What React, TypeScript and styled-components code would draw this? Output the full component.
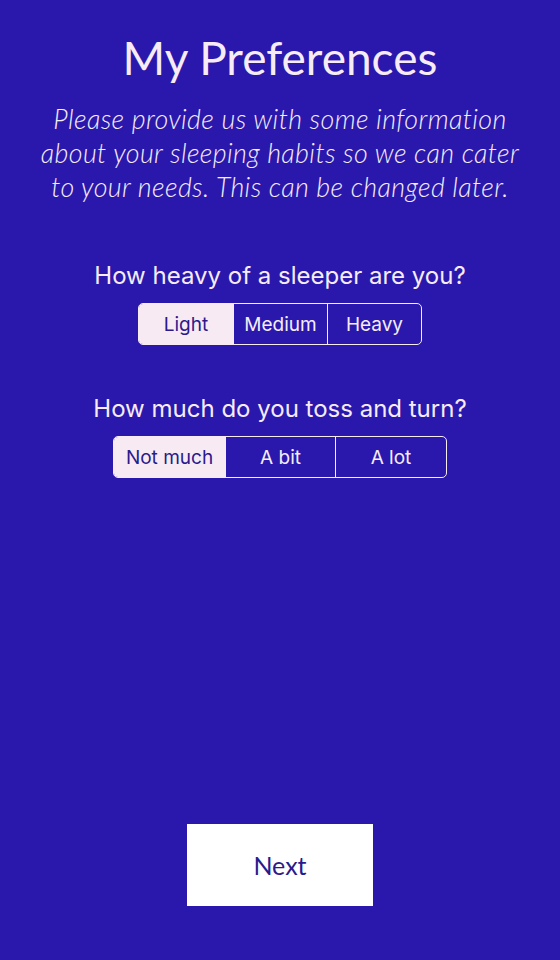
import React, { useState } from "react";
import styled, { createGlobalStyle } from "styled-components";

const Global = createGlobalStyle`
  html, body { margin: 0; padding: 0; background: #2a18ad; }
  body { font-family: "Lato", "Noto Sans", sans-serif; }
`;

const Page = styled.div`
  width: 560px;
  height: 960px;
  background: #2a18ad;
  color: #f7ecf6;
  display: flex;
  flex-direction: column;
  align-items: center;
  box-sizing: border-box;
  padding-top: 30px;
`;

const Title = styled.h1`
  margin: 0;
  font-family: "Lato", sans-serif;
  font-weight: 400;
  font-size: 46px;
  line-height: 56px;
  text-align: center;
`;

const Intro = styled.p`
  margin: 16px 0 0;
  width: 495px;
  font-family: "Lato", sans-serif;
  font-style: italic;
  font-weight: 300;
  font-size: 26.8px;
  letter-spacing: 0.4px;
  line-height: 34px;
  text-align: center;
`;

const Question = styled.div<{ $top: number }>`
  margin-top: ${(p) => p.$top}px;
  display: flex;
  flex-direction: column;
  align-items: center;
  gap: 13px;
`;

const Label = styled.div`
  font-family: "Inter", "Roboto", sans-serif;
  font-size: 24px;
  line-height: 28px;
`;

const Segmented = styled.div`
  display: flex;
  border: 1.5px solid #f7ecf6;
  border-radius: 5px;
  overflow: hidden;
`;

const Segment = styled.button<{ $active: boolean; $w: number }>`
  width: ${(p) => p.$w}px;
  height: 40px;
  margin: 0;
  padding: 0;
  border: none;
  border-left: 1.5px solid #f7ecf6;
  &:first-child { border-left: none; }
  background: ${(p) => (p.$active ? "#f7eaf3" : "transparent")};
  color: ${(p) => (p.$active ? "#2a1a8c" : "#f7ecf6")};
  font-family: "Inter", "Roboto", sans-serif;
  font-size: 19px;
  cursor: pointer;
`;

const Spacer = styled.div`
  flex: 1;
`;

const NextButton = styled.button`
  width: 186px;
  height: 82px;
  margin-bottom: 54px;
  background: #ffffff;
  border: none;
  color: #2a1a8c;
  font-family: "Lato", sans-serif;
  font-size: 25px;
  cursor: pointer;
`;

function Choice({ options, w }: { options: string[]; w: number }) {
  const [sel, setSel] = useState(0);
  return (
    <Segmented>
      {options.map((o, i) => (
        <Segment key={o} $w={w} $active={i === sel} onClick={() => setSel(i)}>
          {o}
        </Segment>
      ))}
    </Segmented>
  );
}

export default function App() {
  return (
    <>
      <Global />
      <Page>
        <Title>My Preferences</Title>
        <Intro>
          Please provide us with some information about your sleeping habits so
          we can cater to your needs. This can be changed later.
        </Intro>
        <Question $top={58}>
          <Label>How heavy of a sleeper are you?</Label>
          <Choice options={["Light", "Medium", "Heavy"]} w={94} />
        </Question>
        <Question $top={50}>
          <Label>How much do you toss and turn?</Label>
          <Choice options={["Not much", "A bit", "A lot"]} w={110.5} />
        </Question>
        <Spacer />
        <NextButton>Next</NextButton>
      </Page>
    </>
  );
}
